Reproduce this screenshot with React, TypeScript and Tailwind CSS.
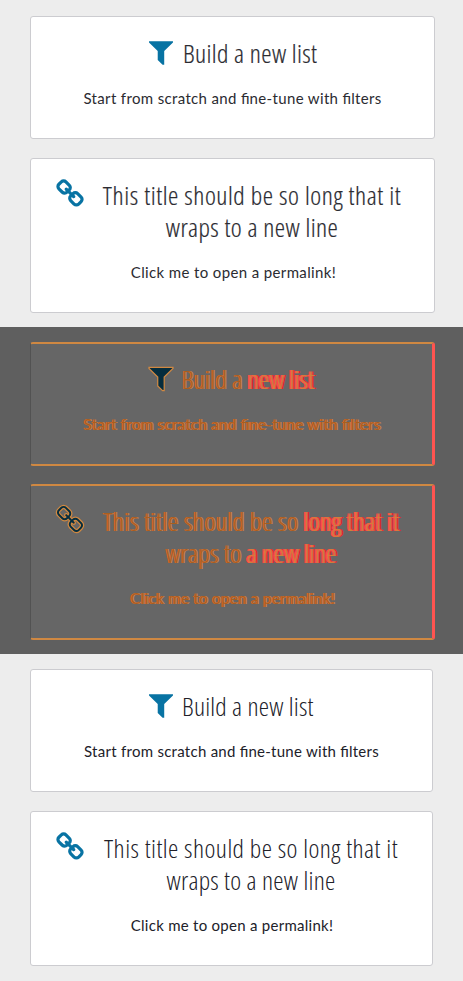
import type { ReactNode } from "react";

const FILTER = "M180 256H1612V330L1088 840V1656H990L700 1376V840L180 330Z";
const CHAIN =
  "M1520 1216q0-40-28-68l-208-208q-28-28-68-28-42 0-72 32 3 3 19 18.5t21.5 21.5 15 19 13 25.5 3.5 27.5q0 40-28 68t-68 28q-15 0-27.5-3.5t-25.5-13-19-15-21.5-21.5-18.5-19q-33 31-33 73 0 40 28 68l206 207q27 27 68 27 40 0 68-26l147-146q28-28 28-67zm-703-705q0-40-28-68l-206-207q-28-28-68-28-39 0-68 27l-147 146q-28 28-28 67 0 40 28 68l208 208q27 27 68 27 42 0 72-31-3-3-19-18.5t-21.5-21.5-15-19-13-25.5-3.5-27.5q0-40 28-68t68-28q15 0 27.5 3.5t25.5 13 19 15 21.5 21.5 18.5 19q33-31 33-73zm895 705q0 120-85 203l-147 146q-83 83-203 83-121 0-204-85l-206-207q-83-83-83-203 0-123 88-209l-88-88q-86 88-208 88-120 0-204-84l-208-208q-84-84-84-204t85-203l147-146q83-83 203-83 121 0 204 85l206 207q83 83 83 203 0 123-88 209l88 88q86-88 208-88 120 0 204 84l208 208q84 84 84 204z";

type Mode = "wide" | "diff" | "narrow";

function Icon({ d, mode }: { d: string; mode: Mode }) {
  const look = mode === "diff" ? "fill-[#052d3e] stroke-[#cf8842] [stroke-width:75]" : "fill-[#0873a3]";
  return (
    <svg viewBox="0 0 1792 1792" className={"block size-[30px] shrink-0 overflow-visible " + look}>
      <path d={d} />
    </svg>
  );
}

function Plain({ children }: { children: ReactNode }) {
  return <>{children}</>;
}

function Orange({ children }: { children: ReactNode }) {
  return <span className="text-[#a85f1e] [text-shadow:-1px_0_#e2663f,1px_0_#cb8640]">{children}</span>;
}

function Red({ children }: { children: ReactNode }) {
  return (
    <span className="text-[#d0803a] [text-shadow:-1px_0_#ff4d4d,1px_0_#ff4d4d,-2px_0_#ff4d4d,2px_0_#c41a1a]">
      {children}
    </span>
  );
}

function Fi() {
  return <span className="tracking-normal">fi</span>;
}

function Card({ mode, className, children }: { mode: Mode; className: string; children: ReactNode }) {
  const look =
    mode === "wide"
      ? "w-[405px] border border-[#ccccd0] bg-white"
      : mode === "narrow"
        ? "w-[403px] border border-[#ccccd0] bg-white"
        : "-mt-px w-[405px] border-y-2 border-l border-r-[3px] border-y-[#cf8842] border-l-[#525252] border-r-[#ff5450] bg-[#666]";
  return <article className={"rounded-[3px] " + look + " " + className}>{children}</article>;
}

const tone = {
  wide: "text-[#2b2b31]",
  diff: "text-[#c87a35]",
  narrow: "text-[#212129]",
};

const titleStroke = {
  wide: "[-webkit-text-stroke:0.2px_#2b2b31]",
  diff: "",
  narrow: "",
};

function Panel({ mode }: { mode: Mode }) {
  const n = mode === "narrow";
  const diff = mode === "diff";
  const O = diff ? Orange : Plain;
  const R = diff ? Red : Plain;
  const panel =
    mode === "wide"
      ? "h-[327px] bg-[#ededed] pt-4"
      : diff
        ? "h-[327px] bg-[#5f5f5f] pt-4"
        : "h-[327px] bg-[#ededed] pt-[15px]";
  return (
    <section className={"flex flex-col items-start pl-[30px] " + panel + " " + tone[mode]}>
      <Card mode={mode} className={diff ? "h-[124px] pt-[19px]" : "h-[123px] pt-5"}>
        <div className="flex pl-[115px]">
          <Icon d={FILTER} mode={mode} />
          <h2
            className={
              "whitespace-nowrap font-['Open_Sans',sans-serif] text-[26px] font-light leading-8 [font-stretch:75%] " +
              titleStroke[mode] +
              (n ? " ml-[6px] tracking-[0.23px]" : diff ? " ml-[6px] tracking-[0.3px]" : " ml-[7px] tracking-[0.4px]")
            }
          >
            <O>Build a</O> <R>new list</R>
          </h2>
        </div>
        <p
          className={
            "mt-[17px] whitespace-nowrap text-center font-['Lato',sans-serif] text-[15px] leading-6 " +
            (n ? "tracking-[0.27px]" : diff ? "pl-0.5 tracking-[0.33px]" : "tracking-[0.35px]")
          }
        >
          <O>
            Start from scratch and <Fi />
            ne-tune with <Fi />
            lters
          </O>
        </p>
      </Card>
      <Card mode={mode} className={diff ? "mt-[18px] h-[156px] pt-[19px]" : "mt-[19px] h-[155px] pt-5"}>
        <div className="flex pl-6">
          <Icon d={CHAIN} mode={mode} />
          <h2
            className={
              "ml-[14px] whitespace-nowrap text-center font-['Open_Sans',sans-serif] text-[26px] font-light leading-8 [font-stretch:75%] " +
              titleStroke[mode] +
              (n ? " w-[304px] tracking-[0.46px]" : diff ? " w-[305px] tracking-[0.52px]" : " w-[306px] tracking-[0.58px]")
            }
          >
            <O>This title should be so</O> <R>long that it</R>
            <span className={"block " + (n ? "tracking-[0.27px]" : diff ? "tracking-[0.36px]" : "tracking-[0.44px]")}>
              <O>wraps to</O> <R>a new line</R>
            </span>
          </h2>
        </div>
        <p
          className={
            "mt-[17px] whitespace-nowrap text-center font-['Lato',sans-serif] text-[15px] leading-6 " +
            (n ? "pl-px tracking-[0.27px]" : diff ? "pl-[3px] tracking-[0.35px]" : "pl-0.5 tracking-[0.37px]")
          }
        >
          <O>Click me to open a permalink!</O>
        </p>
      </Card>
    </section>
  );
}

export default function App() {
  return (
    <main className="h-[981px] w-[463px] overflow-hidden bg-[#ededed]">
      <Panel mode="wide" />
      <Panel mode="diff" />
      <Panel mode="narrow" />
    </main>
  );
}
